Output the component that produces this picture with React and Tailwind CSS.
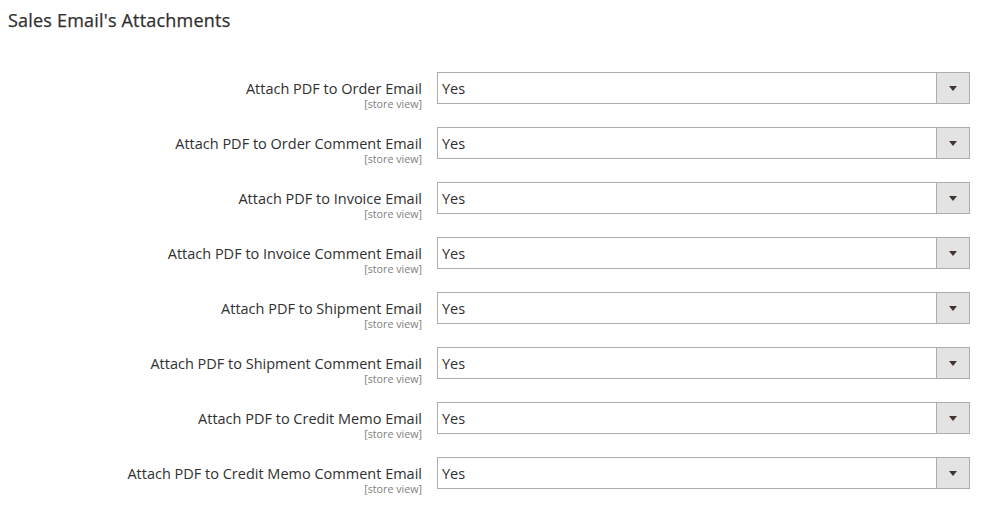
const fields = [
  'Attach PDF to Order Email',
  'Attach PDF to Order Comment Email',
  'Attach PDF to Invoice Email',
  'Attach PDF to Invoice Comment Email',
  'Attach PDF to Shipment Email',
  'Attach PDF to Shipment Comment Email',
  'Attach PDF to Credit Memo Email',
  'Attach PDF to Credit Memo Comment Email',
];

function SelectRow({ label }) {
  return (
    <div className="flex h-[55px] items-start">
      <div className="w-[422px] pt-[7px] text-right">
        <div className="text-[14.5px] leading-[19px] text-[#303030]">{label}</div>
        <div className="text-[10.7px] leading-[12px] text-[#808080]">[store view]</div>
      </div>
      <div className="ml-[15px] flex h-[32px] w-[533px] border border-[#adadad] bg-white">
        <div className="flex flex-1 items-center pl-[4px] pt-[2px] text-[14.5px] text-[#303030]">Yes</div>
        <div className="flex w-[33px] items-center justify-center border-l border-[#adadad] bg-[#e3e3e3]">
          <span className="h-0 w-0 border-x-[4px] border-t-[5px] border-x-transparent border-t-[#41362f]" />
        </div>
      </div>
    </div>
  );
}

export default function App() {
  return (
    <div className="h-[508px] w-[985px] bg-white font-['Open_Sans',sans-serif]">
      <h2 className="px-[8px] pt-[8px] text-[18px] leading-[25px] tracking-[0.2px] text-[#303030] [-webkit-text-stroke:0.25px_#303030]">
        Sales Email's Attachments
      </h2>
      <div className="mt-[39px]">
        {fields.map((f) => (
          <SelectRow key={f} label={f} />
        ))}
      </div>
    </div>
  );
}
